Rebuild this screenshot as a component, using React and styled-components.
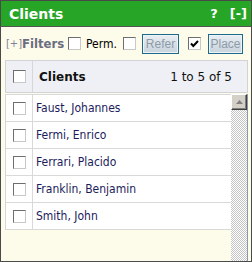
import React from "react";
import styled, { createGlobalStyle } from "styled-components";

const Global = createGlobalStyle`
  html, body { margin: 0; padding: 0; background: #fff; }
  body { font-family: "DejaVu Sans", Verdana, sans-serif; }
`;

const Panel = styled.div`
  width: 252px;
  height: 262px;
  box-sizing: border-box;
  border: 1px solid #4a4a4a;
  background: #fdfbe9;
  display: flex;
  flex-direction: column;
  overflow: hidden;
`;

const TitleBar = styled.div`
  height: 25px;
  flex: none;
  background: #27a527;
  border-bottom: 1px solid #555;
  display: flex;
  align-items: center;
  padding: 0 4px 0 8px;
  color: #fff;
  font-family: "DejaVu Sans", Verdana, sans-serif;
  font-weight: bold;
  font-size: 14px;
`;

const Title = styled.div`
  flex: 1;
`;

const TitleAction = styled.span`
  margin-left: ${(p) => p.$gap || 0}px;
  font-size: 13px;
`;

const FilterRow = styled.div`
  height: 33px;
  flex: none;
  display: flex;
  align-items: center;
  padding: 0 0 0 5px;
  font-family: "Liberation Sans", Arial, sans-serif;
  font-size: 12px;
  white-space: nowrap;
`;

const Toggle = styled.span`
  width: 16px;
  flex: none;
  color: #7d819c;
  font-family: "DejaVu Sans Condensed", "DejaVu Sans", sans-serif;
  font-size: 11px;
`;

const FilterLabel = styled.span`
  width: 46px;
  flex: none;
  color: #6b6e82;
  font-family: "DejaVu Sans Condensed", "DejaVu Sans", sans-serif;
  font-weight: bold;
  font-size: 13px;
`;

const Box = styled.span`
  display: inline-flex;
  align-items: center;
  justify-content: center;
  width: 11px;
  height: 11px;
  flex: none;
  background: #fff;
  border: 1px solid #6e6e6e;
  border-right-color: #c8c8c8;
  border-bottom-color: #c8c8c8;
  margin-right: ${(p) => p.$mr || 0}px;
`;

const Perm = styled.span`
  width: 37px;
  flex: none;
  margin-left: 5px;
  color: #000;
  font-family: "DejaVu Sans Condensed", "DejaVu Sans", sans-serif;
  font-size: 12px;
`;

const Button = styled.span`
  display: inline-flex;
  align-items: center;
  justify-content: center;
  box-sizing: border-box;
  flex: none;
  height: 20px;
  width: ${(p) => p.$w}px;
  border: 1px solid #1d6b8c;
  box-shadow: inset 0 0 0 1px #eef3f6;
  background: linear-gradient(#e9eef2, #c8d3dc);
  color: #8d9ba8;
  font-family: "Liberation Sans", Arial, sans-serif;
  font-size: 12px;
  margin-right: ${(p) => p.$mr || 0}px;
`;

const Table = styled.div`
  flex: 1;
  margin: 0 3px 0 4px;
  display: flex;
  flex-direction: column;
  min-height: 0;
`;

const Header = styled.div`
  height: 31px;
  flex: none;
  border: 1px solid #d2d3d6;
  background: #eef0f5;
  display: flex;
  align-items: stretch;
`;

const CheckCell = styled.div`
  width: 26px;
  flex: none;
  display: flex;
  align-items: center;
  justify-content: center;
  border-right: 1px solid ${(p) => p.$line};
`;

const HeaderLabel = styled.div`
  flex: 1;
  display: flex;
  align-items: center;
  justify-content: space-between;
  padding: 0 15px 0 6px;
  font-family: "DejaVu Sans", Verdana, sans-serif;
  font-size: 12px;
  color: #111;
`;

const HeaderTitle = styled.span`
  font-weight: bold;
`;

const Body = styled.div`
  flex: 1;
  display: flex;
  min-height: 0;
  margin-top: 1px;
`;

const Rows = styled.div`
  flex: 1;
  display: flex;
  flex-direction: column;
`;

const Row = styled.div`
  height: 26px;
  flex: none;
  display: flex;
  align-items: stretch;
  background: #fff;
  border-left: 1px solid #d6d6d6;
  border-bottom: 1px solid #d9d9d9;
  border-top: ${(p) => (p.$first ? "1px solid #d9d9d9" : "none")};
`;

const Name = styled.div`
  flex: 1;
  display: flex;
  align-items: center;
  padding-left: 3px;
  font-family: "DejaVu Sans Condensed", "DejaVu Sans", sans-serif;
  font-size: 12px;
  color: #1c1b5c;
`;

const Scrollbar = styled.div`
  width: 16px;
  flex: none;
  background: repeating-conic-gradient(#c4c4c4 0 25%, #ffffff 0 50%) 0 0 / 2px 2px;
  border-right: 1px solid #8a9aa8;
`;

const ScrollButton = styled.div`
  height: 16px;
  box-sizing: border-box;
  background: #d4d0c8;
  border: 1px solid;
  border-color: #fff #404040 #404040 #fff;
  box-shadow: inset -1px -1px 0 #808080;
  display: flex;
  align-items: center;
  justify-content: center;
`;

const clients = [
  "Faust, Johannes",
  "Fermi, Enrico",
  "Ferrari, Placido",
  "Franklin, Benjamin",
  "Smith, John",
];

const Check = () => (
  <svg width="9" height="8" viewBox="0 0 9 8">
    <path d="M1 3.5 L3.3 6 L8 1" stroke="#000" strokeWidth="2" fill="none" />
  </svg>
);

export default function App() {
  return (
    <>
      <Global />
      <Panel>
        <TitleBar>
          <Title>Clients</Title>
          <TitleAction>?</TitleAction>
          <TitleAction $gap={12}>[-]</TitleAction>
        </TitleBar>
        <FilterRow>
          <Toggle>[+]</Toggle>
          <FilterLabel>Filters</FilterLabel>
          <Box />
          <Perm>Perm.</Perm>
          <Box $mr={6} />
          <Button $w={37} $mr={9}>Refer</Button>
          <Box $mr={7}>
            <Check />
          </Box>
          <Button $w={35}>Place</Button>
        </FilterRow>
        <Table>
          <Header>
            <CheckCell $line="#d6d7da">
              <Box />
            </CheckCell>
            <HeaderLabel>
              <HeaderTitle>Clients</HeaderTitle>
              <span>1 to 5 of 5</span>
            </HeaderLabel>
          </Header>
          <Body>
            <Rows>
              {clients.map((c, i) => (
                <Row key={c} $first={i === 0}>
                  <CheckCell $line="#d9d9d9">
                    <Box />
                  </CheckCell>
                  <Name>{c}</Name>
                </Row>
              ))}
            </Rows>
            <Scrollbar>
              <ScrollButton>
                <svg width="7" height="4" viewBox="0 0 7 4">
                  <path d="M3.5 0 L7 4 L0 4 Z" fill="#808080" />
                </svg>
              </ScrollButton>
            </Scrollbar>
          </Body>
        </Table>
      </Panel>
    </>
  );
}
